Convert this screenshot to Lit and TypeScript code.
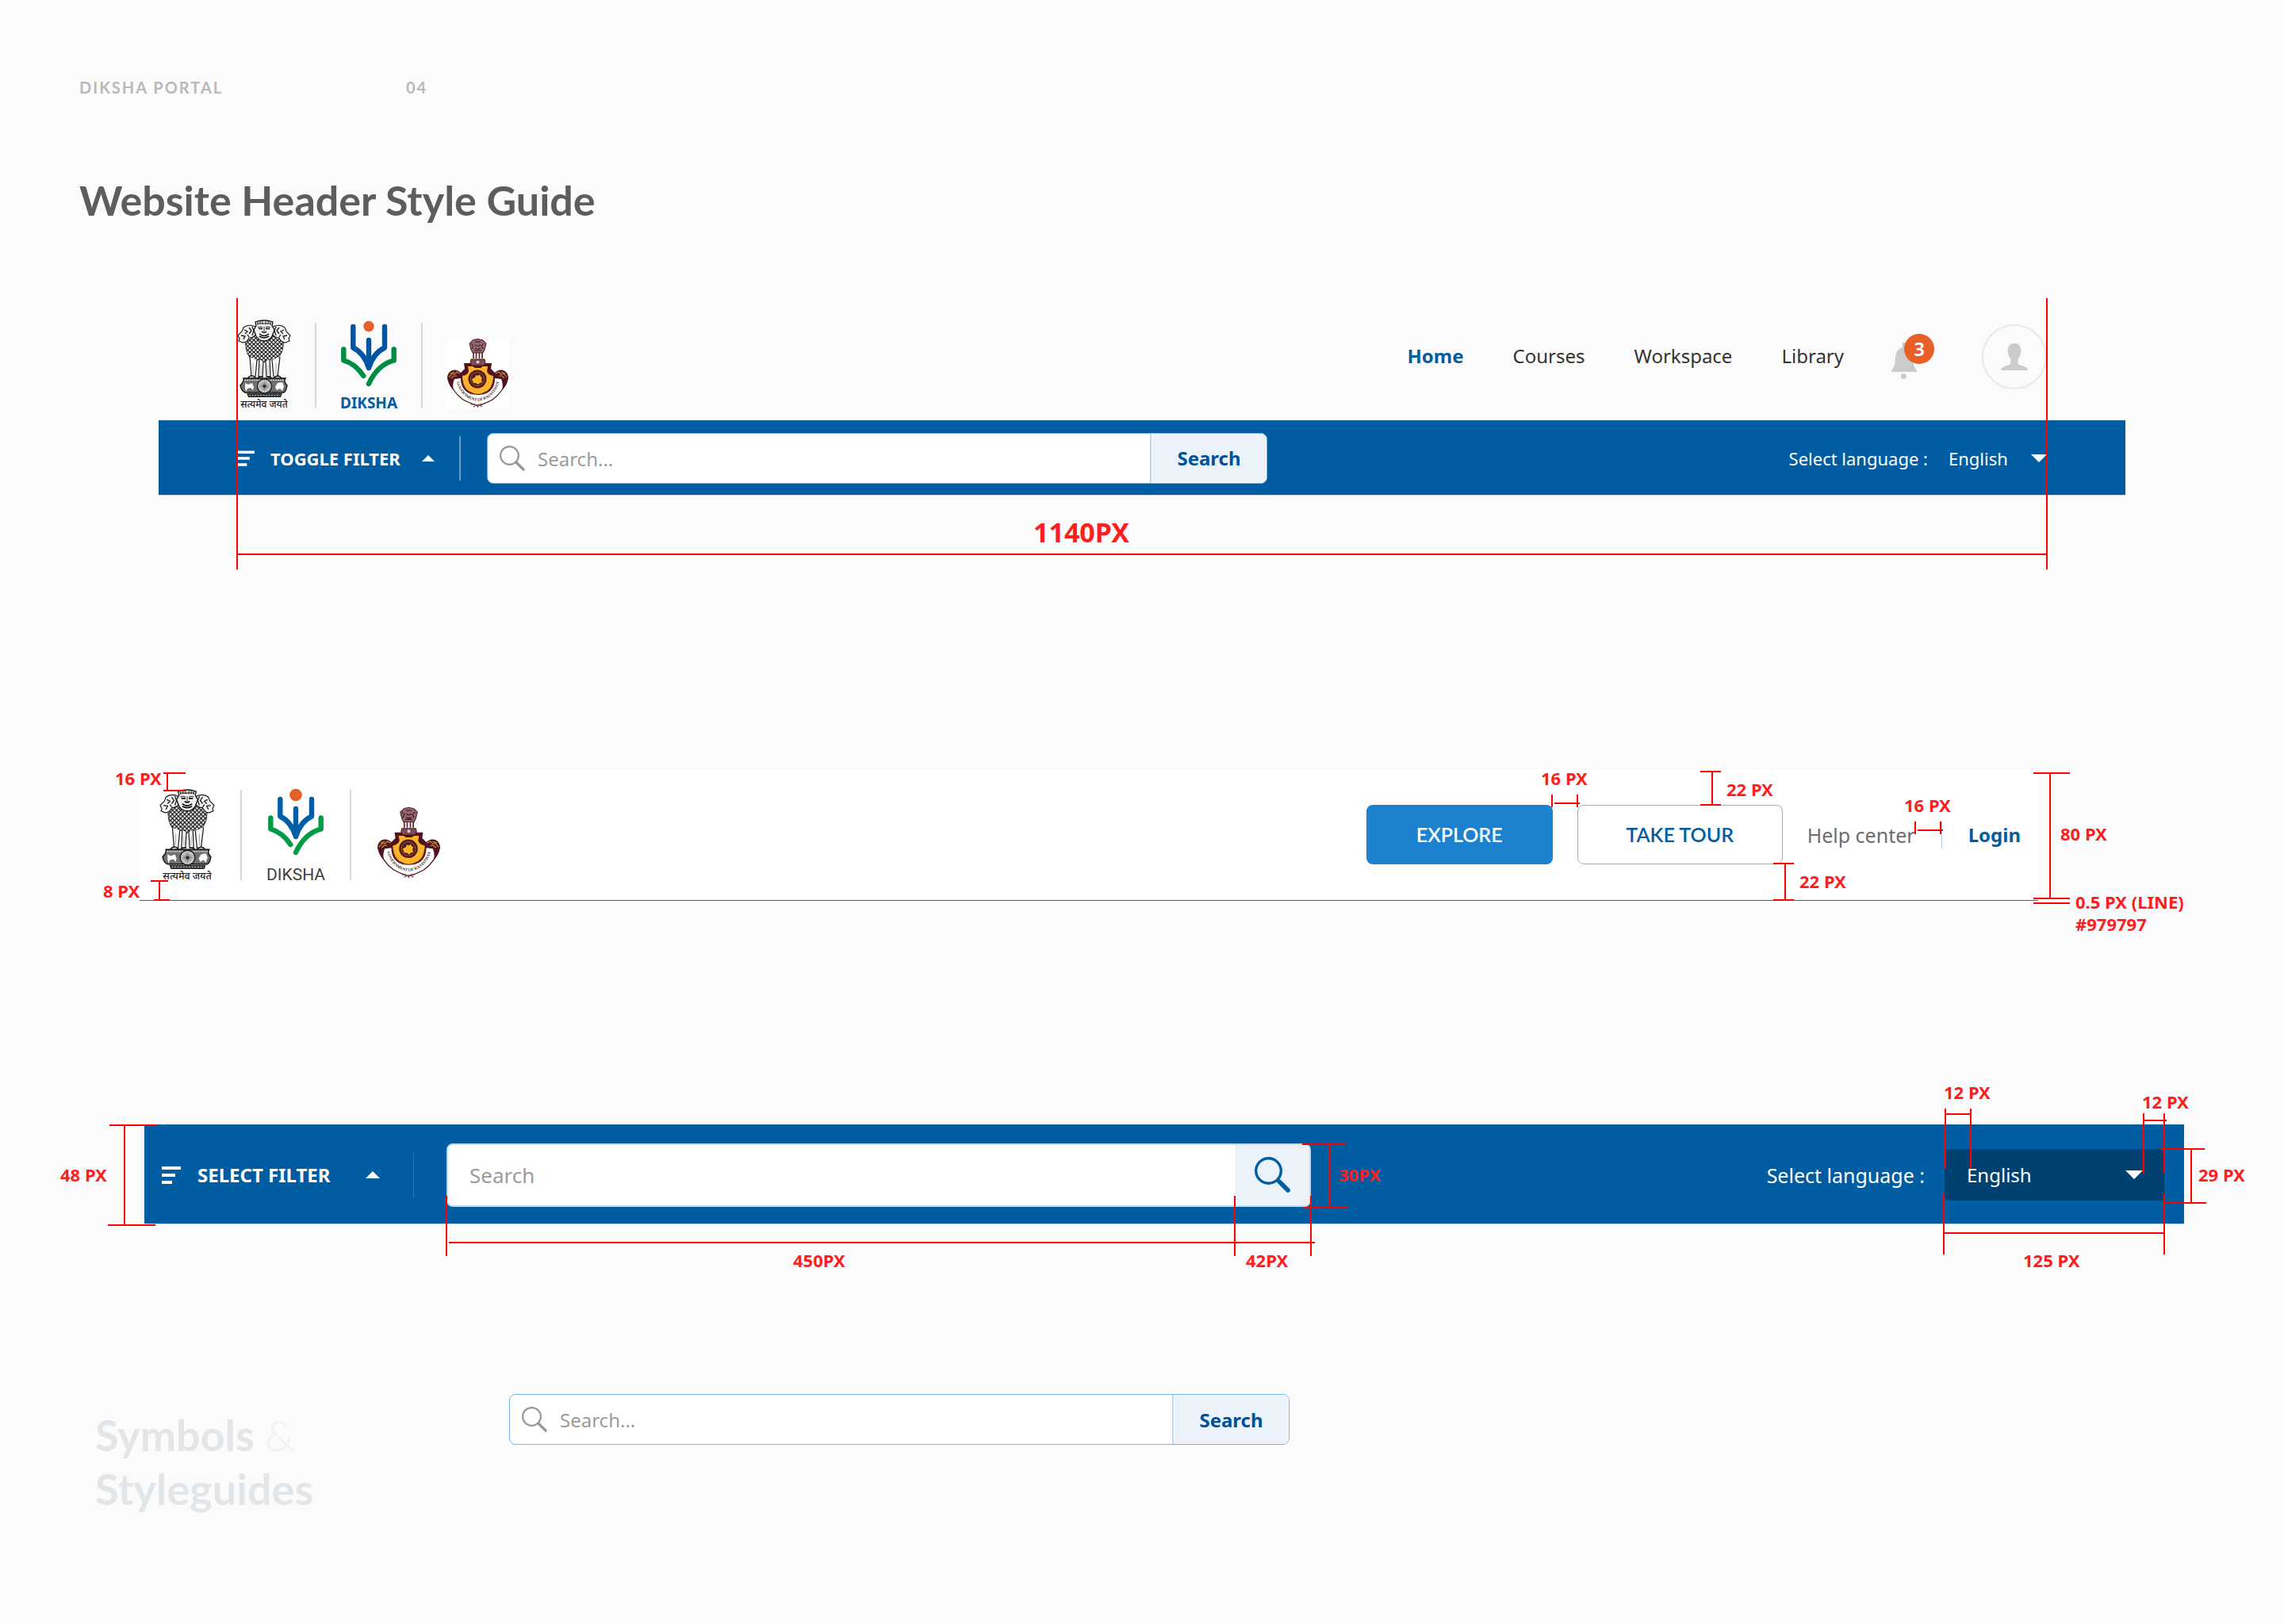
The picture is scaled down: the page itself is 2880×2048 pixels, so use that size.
import { LitElement, html, css, svg } from "lit";
import { customElement, property } from "lit/decorators.js";

/* ---------- Logos ---------- */

@customElement("lion-emblem")
class LionEmblem extends LitElement {
  static styles = css`
    :host { display: block; }
    svg { display: block; width: 100%; height: auto; overflow: visible; }
    .motto { font: 500 12px "Noto Sans Devanagari", "Noto Sans", "Lohit Devanagari", sans-serif; fill: #222; }
  `;
  render() {
    const rays = Array.from({ length: 24 }, (_, i) => {
      const a = (i * Math.PI) / 12;
      return svg`<line x1="33.5" y1="83" x2=${33.5 + 8 * Math.cos(a)} y2=${83 + 8 * Math.sin(a)} stroke="#555" stroke-width=".6"></line>`;
    });
    return html`
      <svg viewBox="0 0 66 111" role="img" aria-label="State Emblem of India">
        <defs>
          <pattern id="fur" width="5" height="5" patternUnits="userSpaceOnUse">
            <rect width="5" height="5" fill="#f4f4f4"></rect>
            <path d="M0 0L2.500 2.500L5 0M0 5L2.500 7.500L5 5M-2.500 2.500L0 5L2.500 2.500L5 5" stroke="#111" stroke-width="1.150" fill="none"></path>
          </pattern>
        </defs>
        <path d="M10 20Q8 38 15 47Q20 54 27 49L33 53L40 49Q48 54 52 46Q59 37 57 20L46 12H20Z" fill="url(#fur)" stroke="#222" stroke-width=".8"></path>
        <path d="M22 8Q13 4 7 9L5 14L0 19L2 23L1 26L6 28Q12 28 14 22Q20 22 23 17Z" fill="#f3f3f3" stroke="#161616" stroke-width="1.100"></path>
        <path d="M44 8Q53 4 59 9L61 14L66 19L64 23L65 26L60 28Q54 28 52 22Q46 22 43 17Z" fill="#f3f3f3" stroke="#161616" stroke-width="1.100"></path>
        <path d="M8 12l4 2-3 3M4 19l5 1-2 4M14 9l3 4-3 4M18 8l2 5-2 6M12 18l2 3M58 12l-4 2 3 3M62 19l-5 1 2 4M52 9l-3 4 3 4M48 8l-2 5 2 6M54 18l-2 3" stroke="#1c1c1c" stroke-width="1.300" fill="none"></path>
        <path d="M22 2Q33-2 44 2L43 7L46 12L43 20Q39 26 33 26Q27 26 23 20L20 12L23 7Z" fill="#f1f1f1" stroke="#161616" stroke-width="1.300"></path>
        <path d="M24 4h18M25 2v4M28 1v4M31 1v4M35 1v4M38 1v4M41 2v4M25 9q3-2 6 0M35 9q3-2 6 0M33 8v6" stroke="#2a2a2a" stroke-width="1" fill="none"></path>
        <path d="M26 10.500h5M35 10.500h5M30 14q3 3 6 0M27 17q6 5 12 0M27 20q6 4 12 0" stroke="#0c0c0c" stroke-width="1.600" fill="none"></path>
        <path d="M15 46L17 71H22L24 50M27 49L26 71H31L32 52M35 52L36 71H41L40 49M43 50L45 71H50L53 46" fill="#f8f8f8" stroke="#1c1c1c" stroke-width="1.200"></path>
        <path d="M19 54v14M29 56v12M38 56v12M48 54v14" stroke="#999" stroke-width=".8"></path>
        <path d="M12 74q2-5 7-4l4 3M24 74q3-4 8-3M36 71q5-1 7 3M45 73l4-3q5 0 6 4" fill="#ddd" stroke="#161616" stroke-width="1.400"></path>
        <path d="M7 73H60Q57 77 62 82Q61 89 58 91H9Q4 89 3 82Q8 77 7 73Z" fill="#707070" stroke="#151515" stroke-width="1.400"></path>
        <path d="M8 75.500H59" stroke="#e8e8e8" stroke-width="1.200" stroke-dasharray="2 1"></path>
        <path d="M9 79l4 2 5-2 2 5-1 4-3-3-4 1-2 4-1-5zM47 84l3-5 6-1 2 5-2 6-3-3-4 2z" fill="#fff"></path>
        <circle cx="33.500" cy="83" r="9" fill="#ececec" stroke="#1a1a1a" stroke-width="1.400"></circle>
        ${rays}
        <circle cx="33.500" cy="83" r="1.800" fill="#222"></circle>
        <path d="M11 92H56L54 97H13Z" fill="#333"></path>
        <path d="M14 94.500H53" stroke="#bbb" stroke-width="1.200" stroke-dasharray="2 1.500"></path>
        <text class="motto" x="33" y="110" text-anchor="middle">सत्यमेव जयते</text>
      </svg>
    `;
  }
}

@customElement("diksha-logo")
class DikshaLogo extends LitElement {
  @property({ type: Boolean, reflect: true }) light = false;
  static styles = css`
    :host { display: block; --blue: #0054a2; --green: #008c41; }
    :host([light]) { --blue: #005da6; --green: #009b49; }
    svg { display: block; width: 100%; height: auto; overflow: visible; }
    .blue { stroke: var(--blue); }
    .green { stroke: var(--green); }
    .bold { font: 700 19px "Noto Sans", sans-serif; fill: #005da4; }
    .thin { font: 400 21px Roboto, sans-serif; fill: #3f3f3f; }
  `;
  render() {
    const armTop = this.light ? 13 : 8;
    return html`
      <svg viewBox=${this.light ? "0 0 70 115" : "0 0 70 111"} role="img" aria-label="Diksha">
        <circle cx="35" cy="7.500" r=${this.light ? 7.8 : 6.7} fill="#e66027"></circle>
        <g fill="none" stroke-width="6.400" stroke-linecap="round" stroke-linejoin="round">
          <path class="blue" d="M15.300 ${armTop}V34.500Q29 41 35 60Q41 41 55 34.500V${armTop}M35 25V60"></path>
          <path class="green" d="M3.300 36.500V50.500Q18 54.500 28.300 70"></path>
          <path class="green" d="M66.700 36.500V50.500Q46 56 35 80"></path>
        </g>
        ${this.light
          ? svg`<text class="thin" x="35" y="114.500" text-anchor="middle">DIKSHA</text>`
          : svg`<text class="bold" x="35" y="110.500" text-anchor="middle">DIKSHA</text>`}
      </svg>
    `;
  }
}

@customElement("rajasthan-seal")
class RajasthanSeal extends LitElement {
  static styles = css`
    :host { display: block; }
    svg { display: block; width: 100%; height: auto; background: #fff; overflow: visible; }
    .ring { font: 700 5px "Liberation Serif", serif; fill: #4a1f26; }
  `;
  render() {
    return html`
      <svg viewBox="0 0 78 88" role="img" aria-label="Government of Rajasthan">
        <defs><path id="band" d="M12 56Q18 76 38.500 79Q59 76 65 56"></path></defs>
        <path d="M2 50Q5 66 20 77Q29 82 38.500 84.500Q48 82 57 77Q72 66 75 50" fill="#fff" stroke="#4b1620" stroke-width="1.300"></path>
        <path d="M21 31H30L34 34H43L47 31H56L55 38L60 43Q65 38 71 40Q77 43 77 50Q75 60 69 65Q71 58 68 51L60 50Q60 70 38.500 71Q17 70 17 50L9 51Q6 58 8 65Q2 60 0 50Q0 43 6 40Q12 38 17 43L22 38Z" fill="#4f141f"></path>
        <path d="M26 35H32L35 37H42L45 35H51L50 41Q51 46 58 47Q59 68 38.500 70Q18 68 19 47Q26 46 27 41Z" fill="#fdb22b"></path>
        <path d="M18.500 52Q20 66 32 69.500M58.500 52Q57 66 45 69.500" stroke="#5b1c1f" stroke-width="2.500" stroke-dasharray="1.500 1" fill="none"></path>
        <circle cx="38" cy="51" r="11.500" fill="#4f1a20"></circle>
        <circle cx="38" cy="51" r="8.600" fill="none" stroke="#a56a2c" stroke-width=".8"></circle>
        <path d="M31 51l4-2 1-3 3 1 2-2 1 3 2 1-1 3 1 3-3 1-2 2-3-2-3 0z" fill="#fdb22b"></path>
        <path d="M2 49l4-5 3 1 3-3 4 2M5 50l3-3 4 0M4 44l5-2M75 49l-4-5-3 1-3-3-4 2M72 50l-3-3-4 0M73 44l-5-2" stroke="#c4892f" stroke-width="1.200" fill="none"></path>
        <path d="M32 2Q38-1 45 2L49 6L47 14L45 18H32L30 14L28 6Z" fill="#8f686d" stroke="#4f141f" stroke-width="1"></path>
        <path d="M30 6l3 3-2 4M46 6l-3 3 2 4M35 4h7M35 8q3.500 3 7 0M35 12q3.500 3 7 0M34 15h9" stroke="#3c1018" stroke-width="1" fill="none"></path>
        <path d="M33 18v7M36.500 18v7M40.500 18v7M44 18v7" stroke="#5c2831" stroke-width="1.700"></path>
        <path d="M30 26H47L48 30L46 34H31L29 30Z" fill="#7b4f55" stroke="#4f141f" stroke-width="1"></path>
        <circle cx="38.500" cy="29.500" r="2.600" fill="#d8c5c8" stroke="#4f141f" stroke-width=".7"></circle>
        <path d="M30 83q4-1 8 2q4-3 8-2M33 86l3-2M44 86l-3-2M38.500 83v4" stroke="#7b4a52" stroke-width="1.500" fill="none"></path>
        <text class="ring"><textPath href="#band" startOffset="50%" text-anchor="middle">GOVERNMENT OF RAJASTHAN</textPath></text>
      </svg>
    `;
  }
}

/* ---------- Measurement overlay ---------- */

type Side = "l" | "r";
/* side, offset from that side, top, width, height */
type Line = [Side, number, number, number, number];
/* anchor side, offset of the text's left edge, top, text */
type Label = [Side, number, number, string];

const landingLines: Line[] = [
  ["l", 30, 4, 28, 2], ["l", 30, 26, 28, 2], ["l", 34, 4, 2, 24],
  ["l", 14, 140, 22, 2], ["l", 18, 164, 20, 2], ["l", 24, 140, 2, 26],
  ["r", 612, 32, 2, 16], ["r", 580, 32, 2, 16], ["r", 578, 42, 32, 2],
  ["r", 400, 2, 26, 2], ["r", 400, 44, 26, 2], ["r", 410, 2, 2, 44],
  ["r", 308, 118, 26, 2], ["r", 308, 164, 26, 2], ["r", 318, 118, 2, 48],
  ["r", 154, 66, 2, 16], ["r", 122, 66, 2, 16], ["r", 120, 76, 32, 2],
  ["r", -40, 4, 46, 2], ["r", -40, 162, 46, 2], ["r", -40, 168, 46, 2], ["r", -16, 4, 2, 160],
];
const landingLabels: Label[] = [
  ["l", -31, -1, "16 PX"], ["l", -46, 141, "8 PX"],
  ["r", -627, -1, "16 PX"], ["r", -393, 13, "22 PX"], ["r", -301, 129, "22 PX"],
  ["r", -169, 33, "16 PX"], ["r", 28, 69, "80 PX"],
  ["r", 47, 155, "0.5 PX (LINE)"], ["r", 47, 183, "#979797"],
];
const filterLines: Line[] = [
  ["l", -44, 0, 60, 2], ["l", -46, 126, 60, 2], ["l", -26, 0, 2, 128],
  ["l", 380, 90, 2, 76], ["l", 1374, 90, 2, 76], ["l", 1470, 90, 2, 76], ["l", 384, 148, 1092, 2],
  ["l", 1460, 24, 56, 2], ["l", 1462, 104, 56, 2], ["l", 1494, 24, 2, 82],
  ["r", 300, -20, 2, 76], ["r", 268, -20, 2, 76], ["r", 270, -14, 30, 2],
  ["r", 50, -14, 2, 76], ["r", 24, -14, 2, 76], ["r", 22, -6, 28, 2],
  ["r", -26, 30, 56, 2], ["r", -28, 98, 55, 2], ["r", -10, 30, 2, 70],
  ["r", 302, 88, 2, 76], ["r", 24, 88, 2, 76], ["r", 24, 136, 280, 2],
];
const filterLabels: Label[] = [
  ["l", -106, 51, "48 PX"], ["l", 818, 159, "450PX"], ["l", 1389, 159, "42PX"], ["l", 1506, 51, "30PX"],
  ["r", -303, -53, "12 PX"], ["r", -53, -41, "12 PX"], ["r", 18, 51, "29 PX"], ["r", -203, 159, "125 PX"],
];

@customElement("measure-overlay")
class MeasureOverlay extends LitElement {
  @property({ attribute: false }) lines: Line[] = [];
  @property({ attribute: false }) labels: Label[] = [];
  static styles = css`
    :host { position: absolute; inset: 0; pointer-events: none; }
    .line { position: absolute; background: #ff0000; }
    .label { position: absolute; white-space: nowrap; font: 700 22px/24px "Noto Sans", sans-serif; color: #ff1d1d; }
  `;
  render() {
    return html`
      ${this.lines.map(([s, x, y, w, h]) => html`<div class="line" style="${s === "l" ? "left" : "right"}:${x}px;top:${y}px;width:${w}px;height:${h}px"></div>`)}
      ${this.labels.map(([s, x, y, t]) => html`<span class="label" style="left:${s === "l" ? `${x}px` : `calc(100% + ${x}px)`};top:${y}px">${t}</span>`)}
    `;
  }
}

/* ---------- Page ---------- */

const magnifier = (cls: string) => html`
  <svg class=${cls} viewBox="0 0 32 32" aria-hidden="true">
    <circle cx="12.500" cy="12.500" r="11.400" fill="none" stroke="currentColor" stroke-width="2.200"></circle>
    <path d="M20.800 21L30 30" stroke="currentColor" stroke-width="3.400" stroke-linecap="round"></path>
    <path d="M20 20L22 22" stroke="currentColor" stroke-width="2"></path>
  </svg>`;
const boldMagnifier = (cls: string) => html`
  <svg class=${cls} viewBox="0 0 45 45" aria-hidden="true">
    <circle cx="17.500" cy="17.500" r="15.800" fill="none" stroke="currentColor" stroke-width="3.400"></circle>
    <path d="M28 28.500L32 32" stroke="currentColor" stroke-width="4"></path>
    <path d="M31 31L42 42" stroke="currentColor" stroke-width="5.600" stroke-linecap="round"></path>
  </svg>`;
const bars = (cls: string) => html`
  <svg class=${cls} viewBox="0 0 24 22" aria-hidden="true">
    <path d="M0 0H24V4H0ZM0 9H17V13H0ZM0 18H13V22H0Z" fill="currentColor"></path>
  </svg>`;
const up = (cls: string) => html`<svg class=${cls} viewBox="0 0 18 9" aria-hidden="true"><path d="M9 0L18 9H0Z" fill="currentColor"></path></svg>`;
const down = (cls: string) => html`<svg class=${cls} viewBox="0 0 22 11" aria-hidden="true"><path d="M0 0H22L11 11Z" fill="currentColor"></path></svg>`;

@customElement("app-root")
class AppRoot extends LitElement {
  static styles = css`
    :host { display: block; min-height: 100vh; background: #fbfbfb; font-family: "Noto Sans", sans-serif; color: #333; overflow-x: hidden; }
    * { box-sizing: border-box; }
    h1, h2, p { margin: 0; }
    a { color: inherit; text-decoration: none; }
    button, input, select { font: inherit; color: inherit; border: 0; background: none; padding: 0; margin: 0; border-radius: 0; outline: 0; }
    select { appearance: none; }
    svg { display: block; flex: none; }

    .page { display: flex; flex-direction: column; padding-top: 98px; padding-bottom: 136px; }
    .meta { display: flex; padding-left: 100px; font: 700 20px/24px Lato, sans-serif; letter-spacing: 2px; color: #b9b9b9; }
    .meta-name { width: 412px; }
    .title { margin-top: 98px; padding-left: 100px; font: 700 52px/64px Lato, sans-serif; color: #5c5e5d; }

    .spec { position: relative; }
    .brand { display: flex; align-items: flex-end; }
    .rule { width: 2px; height: 108px; margin: 0 31px; background: #d8d8d8; }

    /* signed-in header */
    .member { margin: 92px 200px 0; }
    .member-top { display: flex; justify-content: space-between; height: 154px; padding: 0 99px 15px 100px; }
    .emblem { width: 66px; }
    .diksha { width: 70px; }
    .seal { width: 78px; }
    .account { display: flex; align-items: center; gap: 60px; height: 82px; margin-top: 33px; }
    .nav { display: flex; gap: 62px; padding-bottom: 2px; font-size: 24px; line-height: 32px; }
    .nav-active { font-weight: 700; color: #005da4; }
    .bell { position: relative; width: 54px; height: 58px; }
    .bell-icon { width: 32px; height: 47px; margin-top: 11px; }
    .badge { position: absolute; top: 0; right: 0; width: 38px; height: 38px; border-radius: 50%; background: #e66027; color: #fff; font-size: 24px; line-height: 38px; font-weight: 600; text-align: center; }
    .avatar { display: grid; place-items: center; width: 82px; height: 82px; border: 2px solid #e8e8e8; border-radius: 50%; }
    .avatar-icon { width: 34px; height: 34px; }
    .bar { display: flex; align-items: center; background: #005da2; color: #fff; border-bottom: 1px solid #d3dbe2; padding-top: 2px; }
    .bar-member { height: 95px; padding-left: 100px; padding-right: 99px; font-size: 22px; line-height: 32px; }
    .filter { display: flex; align-items: center; font-weight: 700; white-space: nowrap; }
    .filter-sm { gap: 20px; width: 248px; }
    .bars-sm { width: 21px; height: 20px; }
    .up-sm { width: 16px; height: 8px; margin-left: auto; }
    .bar-rule { width: 2px; height: 56px; margin: 0 33px 0 31px; background: #6b9dc8; }
    .search { display: flex; flex: 0 1 984px; height: 64px; border: 1px solid #78b2ee; border-radius: 8px; background: #fff; overflow: hidden; font-size: 24px; }
    .search-field { display: flex; flex: 1; align-items: center; gap: 16px; padding-left: 15px; color: #999; }
    .search-input { flex: 1; min-width: 0; height: 100%; }
    .search-input::placeholder { color: #9b9b9b; opacity: 1; }
    .mag { width: 32px; height: 32px; color: #999; }
    .search-button { width: 147px; border-left: 2px solid #bcd8f5; background: #ebf2f9; box-shadow: inset 0 0 0 1px #fff; color: #00509d; font-weight: 700; }
    .lang { display: flex; align-items: center; margin-left: auto; white-space: nowrap; }
    .lang-sm { gap: 26px; }
    .picker { display: grid; align-items: center; }
    .picker > * { grid-area: 1 / 1; }
    .select-sm { width: 124px; height: 40px; }
    .down-sm { width: 20px; height: 10px; justify-self: end; pointer-events: none; }
    .frame { position: absolute; top: 0; left: 98px; right: 98px; height: 342px; border: solid #ff0000; border-width: 0 2px; pointer-events: none; }
    .frame-line { position: absolute; left: 0; right: 0; top: 322px; height: 2px; background: #ff0000; }
    .frame-label { position: absolute; left: 0; right: 0; top: 275px; padding-right: 153px; text-align: center; font: 700 34px/40px "Noto Sans", sans-serif; color: #ff1d1d; }

    /* landing header */
    .landing { margin: 345px 310px 0 176px; display: flex; justify-content: space-between; height: 166px; padding: 0 22px 25px 26px; background: #fff; border-bottom: 1px solid #1f69aa; }
    .landing .rule { height: 114px; margin: 0 33px; }
    .landing .emblem { width: 68px; }
    .landing .seal { width: 80px; margin-bottom: 2px; }
    .actions { display: flex; align-items: center; height: 75px; margin-top: 45px; font-size: 24px; line-height: 32px; }
    .button { height: 75px; padding-bottom: 2px; border-radius: 8px; font: 600 25px/32px Lato, sans-serif; }
    .explore { width: 235px; background: #1c82cf; color: #fff; }
    .tour { width: 259px; margin: 0 31px; border: 1px solid #86b4d6; color: #005da4; background: #fff; }
    .help { font-size: 25px; color: #6d6d6d; }
    .login-rule { width: 1px; height: 34px; margin: 0 33px; background: #b3cfe8; }
    .login { font-weight: 700; color: #005da4; }

    /* filter bar */
    .filters { margin: 282px 126px 0 182px; }
    .bar-filter { height: 126px; padding-left: 22px; padding-right: 25px; font-size: 24px; line-height: 32px; }
    .filter-lg { gap: 21px; width: 275px; }
    .bars-lg { width: 24px; height: 22px; }
    .up-lg { width: 18px; height: 9px; margin-left: auto; }
    .bar-rule-lg { width: 1px; height: 56px; margin: 0 41px 0 42px; background: #2f78b3; }
    .search-lg { flex-basis: 1090px; height: 80px; border: 2px solid #c3dcf2; font-size: 26px; }
    .search-lg .search-field { padding-left: 27px; }
    .icon-button { display: grid; place-items: center; width: 94px; background: #ebf2f9; color: #005da2; }
    .mag-lg { width: 45px; height: 45px; }
    .lang-lg { gap: 25px; }
    .lang-label-lg { font-size: 25px; }
    .select-lg { width: 277px; height: 65px; padding-left: 28px; border-radius: 6px; background: #004171; }
    .down-lg { width: 22px; height: 11px; margin-right: 27px; justify-self: end; pointer-events: none; }

    /* footer */
    .foot { display: flex; align-items: flex-start; margin-top: 214px; padding-left: 120px; }
    .caption { width: 522px; padding-top: 18px; font: 700 54px/68px Lato, sans-serif; color: #e2e6e9; }
    .amp { font-weight: 300; color: #eff1f2; }
  `;

  render() {
    return html`
      <main class="page">
        <div class="meta"><span class="meta-name">DIKSHA PORTAL</span><span>04</span></div>
        <h1 class="title">Website Header Style Guide</h1>

        <section class="spec member">
          <div class="member-top">
            <div class="brand">
              <lion-emblem class="emblem"></lion-emblem><span class="rule"></span>
              <diksha-logo class="diksha"></diksha-logo><span class="rule"></span>
              <rajasthan-seal class="seal"></rajasthan-seal>
            </div>
            <div class="account">
              <nav class="nav">
                <a class="nav-active" href="#home">Home</a>
                <a href="#courses">Courses</a>
                <a href="#workspace">Workspace</a>
                <a href="#library">Library</a>
              </nav>
              <button class="bell" aria-label="Notifications">
                <svg class="bell-icon" viewBox="0 0 32 47" aria-hidden="true">
                  <path d="M14 0H18V6Q27 9 27 19Q27 30 32 35V37H0V35Q5 30 5 19Q5 9 14 6Z" fill="#cbcbcb"></path>
                  <circle cx="15.500" cy="42.500" r="3.500" fill="#cbcbcb"></circle>
                </svg>
                <span class="badge">3</span>
              </button>
              <button class="avatar" aria-label="Profile">
                <svg class="avatar-icon" viewBox="0 0 34 34" aria-hidden="true">
                  <path d="M17 0Q25 0 25 8Q26 10 24.500 13Q24 17 21.500 20V25Q23 28 28 28.500Q34 30 34 34H0Q0 30 6 28.500Q11 28 12.500 25V20Q10 17 9.500 13Q8 10 9 8Q9 0 17 0Z" fill="#cbcbcb"></path>
                </svg>
              </button>
            </div>
          </div>
          <div class="bar bar-member">
            <button class="filter filter-sm">${bars("bars-sm")}<span>TOGGLE FILTER</span>${up("up-sm")}</button>
            <span class="bar-rule"></span>
            ${this.searchBox("Search the portal")}
            <div class="lang lang-sm">
              <label for="lang-a">Select language :</label>
              <div class="picker">
                <select class="select-sm" id="lang-a"><option>English</option></select>
                ${down("down-sm")}
              </div>
            </div>
          </div>
          <div class="frame">
            <div class="frame-line"></div>
            <div class="frame-label">1140PX</div>
          </div>
        </section>

        <section class="spec landing">
          <div class="brand">
            <lion-emblem class="emblem"></lion-emblem><span class="rule"></span>
            <diksha-logo class="diksha" light></diksha-logo><span class="rule"></span>
            <rajasthan-seal class="seal"></rajasthan-seal>
          </div>
          <div class="actions">
            <button class="button explore">EXPLORE</button>
            <button class="button tour">TAKE TOUR</button>
            <a class="help" href="#help">Help center</a>
            <span class="login-rule"></span>
            <a class="login" href="#login">Login</a>
          </div>
          <measure-overlay .lines=${landingLines} .labels=${landingLabels}></measure-overlay>
        </section>

        <section class="spec filters">
          <div class="bar bar-filter">
            <button class="filter filter-lg">${bars("bars-lg")}<span>SELECT FILTER</span>${up("up-lg")}</button>
            <span class="bar-rule-lg"></span>
            <div class="search search-lg">
              <div class="search-field">
                <input class="search-input" type="text" placeholder="Search" aria-label="Search" />
              </div>
              <button class="icon-button" aria-label="Run search">${boldMagnifier("mag-lg")}</button>
            </div>
            <div class="lang lang-lg">
              <label class="lang-label-lg" for="lang-b">Select language :</label>
              <div class="picker">
                <select class="select-lg" id="lang-b"><option>English</option></select>
                ${down("down-lg")}
              </div>
            </div>
          </div>
          <measure-overlay .lines=${filterLines} .labels=${filterLabels}></measure-overlay>
        </section>

        <section class="foot">
          <p class="caption">Symbols <span class="amp">&amp;</span><br />Styleguides</p>
          ${this.searchBox("Search sample")}
        </section>
      </main>
    `;
  }

  private searchBox(label: string) {
    return html`
      <div class="search">
        <div class="search-field">
          ${magnifier("mag")}
          <input class="search-input" type="text" placeholder="Search..." aria-label=${label} />
        </div>
        <button class="search-button">Search</button>
      </div>
    `;
  }
}
